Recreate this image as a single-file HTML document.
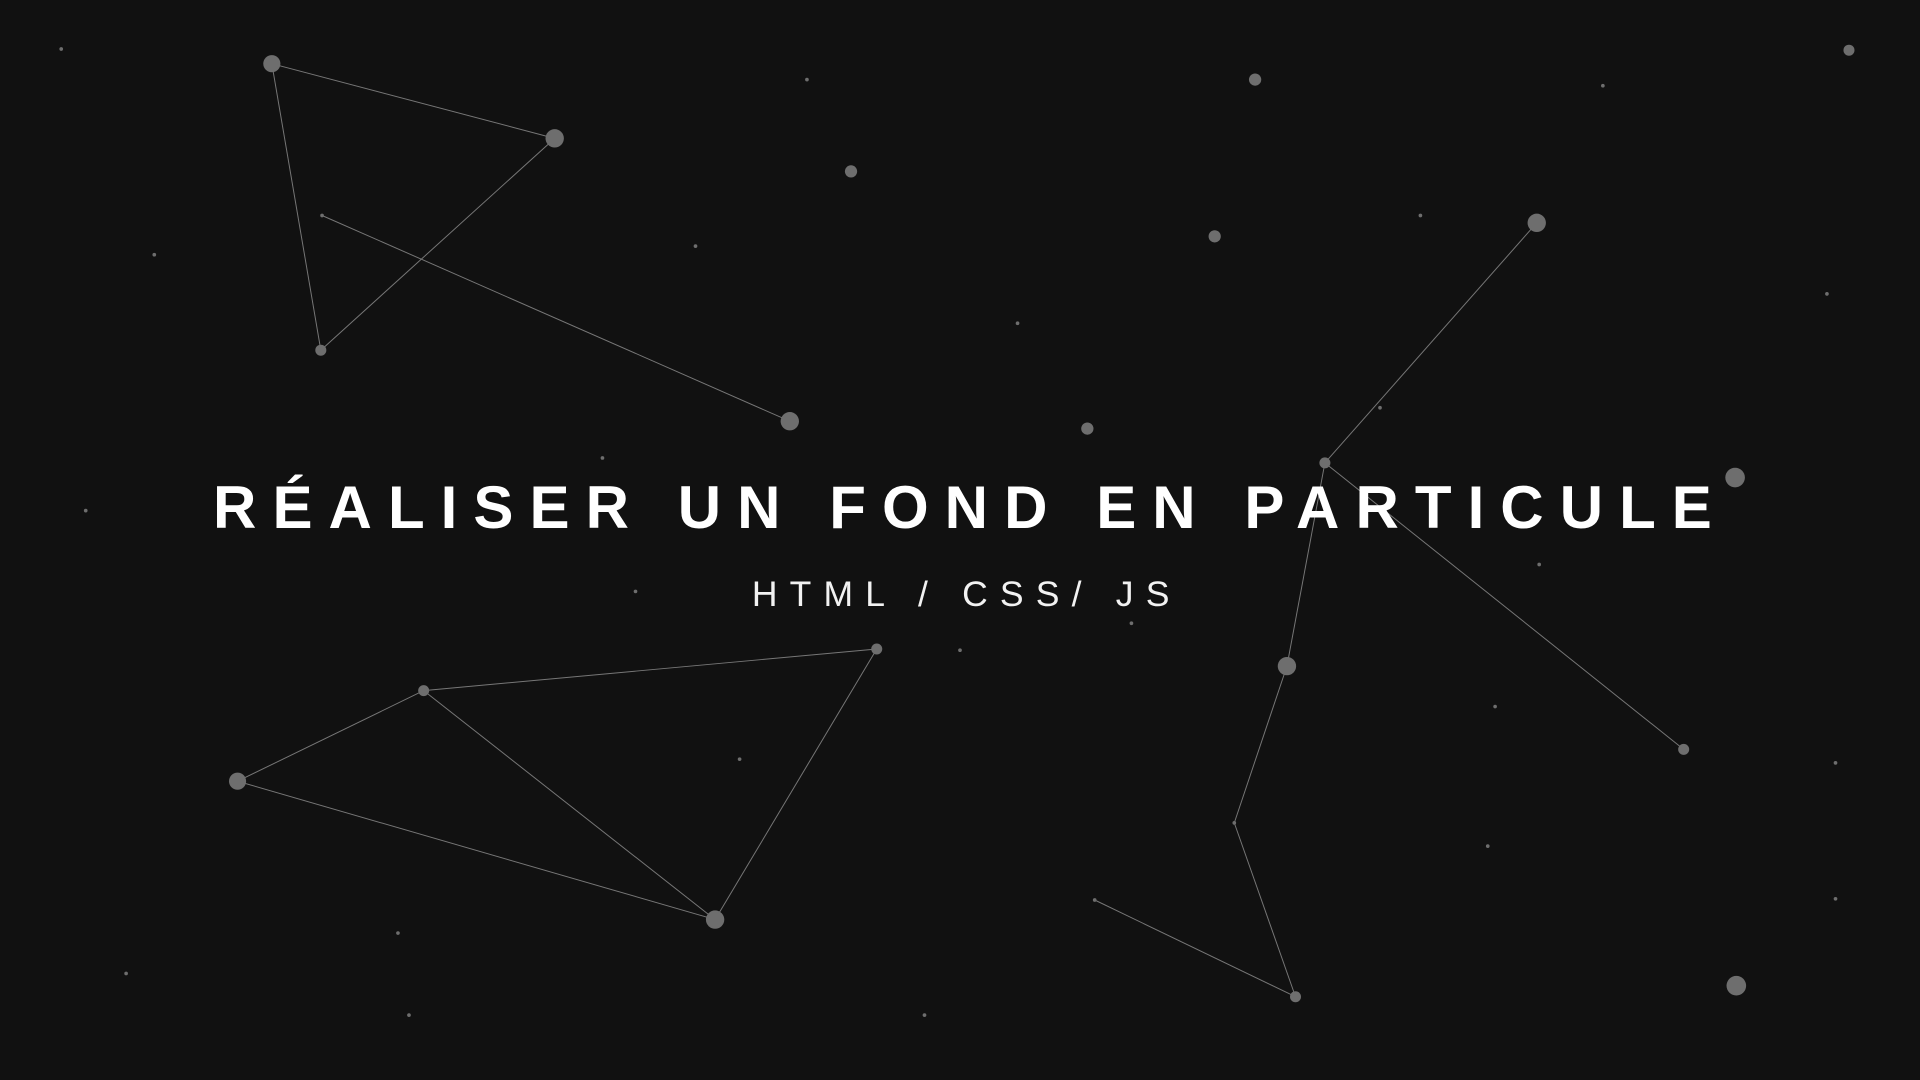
<!DOCTYPE html>
<html><head><meta charset="utf-8"><style>
html,body{margin:0;padding:0;background:#111;width:1920px;height:1080px;overflow:hidden}
svg{display:block}
</style></head><body>
<svg width="1920" height="1080" viewBox="0 0 1568 882" xmlns="http://www.w3.org/2000/svg">
<rect width="1568" height="882" fill="#111111"/>
<g stroke="#777" stroke-width="0.8" fill="none">
<line x1="222" y1="52" x2="453" y2="113"/>
<line x1="222" y1="52" x2="262" y2="286"/>
<line x1="453" y1="113" x2="262" y2="286"/>
<line x1="263" y1="176" x2="645" y2="344"/>
<line x1="1255" y1="182" x2="1082" y2="378"/>
<line x1="1082" y1="378" x2="1375" y2="612"/>
<line x1="1082" y1="378" x2="1051" y2="544"/>
<line x1="1051" y1="544" x2="1008" y2="672"/>
<line x1="1008" y1="672" x2="1058" y2="814"/>
<line x1="894" y1="735" x2="1058" y2="814"/>
<line x1="346" y1="564" x2="716" y2="530"/>
<line x1="346" y1="564" x2="194" y2="638"/>
<line x1="346" y1="564" x2="584" y2="751"/>
<line x1="194" y1="638" x2="584" y2="751"/>
<line x1="716" y1="530" x2="584" y2="751"/>
</g>
<g fill="#6e6e6e">
<circle cx="222" cy="52" r="7"/><circle cx="453" cy="113" r="7.5"/><circle cx="262" cy="286" r="4.5"/>
<circle cx="645" cy="344" r="7.5"/><circle cx="1255" cy="182" r="7.5"/><circle cx="1082" cy="378" r="4.5"/>
<circle cx="1375" cy="612" r="4.5"/><circle cx="1051" cy="544" r="7.5"/><circle cx="1058" cy="814" r="4.5"/>
<circle cx="716" cy="530" r="4.5"/><circle cx="346" cy="564" r="4.5"/><circle cx="194" cy="638" r="7"/>
<circle cx="584" cy="751" r="7.5"/><circle cx="1417" cy="390" r="8"/><circle cx="1418" cy="805" r="8"/>
<circle cx="1025" cy="65" r="5"/><circle cx="695" cy="140" r="5"/><circle cx="992" cy="193" r="5"/>
<circle cx="888" cy="350" r="5"/><circle cx="1510" cy="41" r="4.5"/>
<circle cx="1008" cy="672" r="1.5"/><circle cx="894" cy="735" r="1.5"/><circle cx="263" cy="176" r="1.5"/>
<circle cx="50" cy="40" r="1.5"/><circle cx="659" cy="65" r="1.5"/><circle cx="1309" cy="70" r="1.5"/>
<circle cx="126" cy="208" r="1.5"/><circle cx="568" cy="201" r="1.5"/><circle cx="831" cy="264" r="1.5"/>
<circle cx="1160" cy="176" r="1.5"/><circle cx="1492" cy="240" r="1.5"/><circle cx="1127" cy="333" r="1.5"/>
<circle cx="70" cy="417" r="1.5"/><circle cx="492" cy="374" r="1.5"/><circle cx="519" cy="483" r="1.5"/>
<circle cx="1257" cy="461" r="1.5"/><circle cx="924" cy="509" r="1.5"/><circle cx="784" cy="531" r="1.5"/>
<circle cx="1221" cy="577" r="1.5"/><circle cx="604" cy="620" r="1.5"/><circle cx="1499" cy="623" r="1.5"/>
<circle cx="1215" cy="691" r="1.5"/><circle cx="1499" cy="734" r="1.5"/><circle cx="325" cy="762" r="1.5"/>
<circle cx="103" cy="795" r="1.5"/><circle cx="334" cy="829" r="1.5"/><circle cx="755" cy="829" r="1.5"/>
</g>
<text x="174" y="431" fill="#fff" font-family="Liberation Sans, sans-serif" font-weight="bold" font-size="49" textLength="1224" lengthAdjust="spacing">RÉALISER UN FOND EN PARTICULE</text>
<text x="614" y="495" fill="#f2f2f2" font-family="Liberation Sans, sans-serif" font-size="29" textLength="341" lengthAdjust="spacing">HTML / CSS/ JS</text>
</svg>
</body></html>
